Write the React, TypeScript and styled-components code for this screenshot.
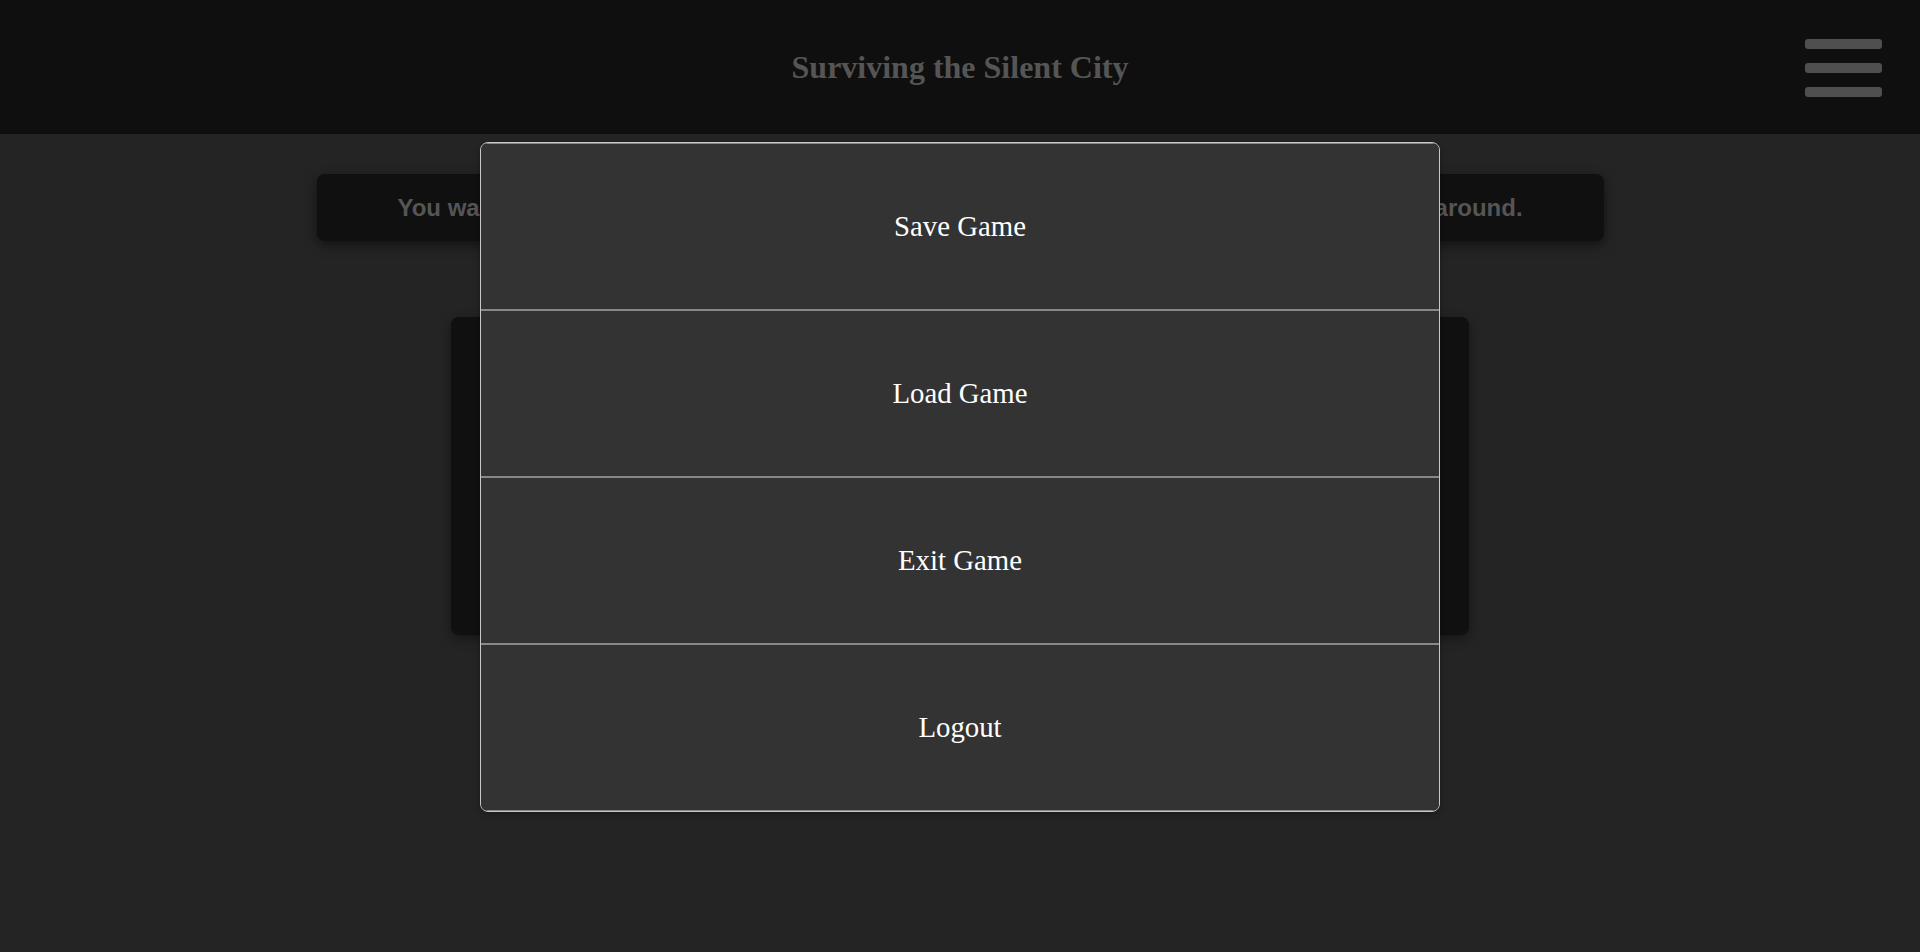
import React from "react";
import styled, { createGlobalStyle } from "styled-components";

const GlobalStyle = createGlobalStyle`
  html, body {
    margin: 0;
    padding: 0;
    background: #242424;
    height: 100%;
  }
  body {
    font-family: "Liberation Serif", "Times New Roman", serif;
    overflow: hidden;
  }
  #root {
    min-height: 100vh;
  }
`;

const Page = styled.div`
  min-height: 952px;
  background: #242424;
  display: flex;
  flex-direction: column;
`;

const Header = styled.header`
  height: 134px;
  background: #0f0f0f;
  display: grid;
  grid-template-columns: 1fr auto 1fr;
  align-items: center;
  padding: 0 38px;
  box-sizing: border-box;
`;

const Title = styled.h1`
  grid-column: 2;
  margin: 0;
  font-family: "Liberation Serif", "Times New Roman", serif;
  font-weight: bold;
  font-size: 32px;
  color: #555555;
`;

const MenuButton = styled.button`
  grid-column: 3;
  justify-self: end;
  background: none;
  border: none;
  padding: 0;
  display: flex;
  flex-direction: column;
  gap: 14px;
  cursor: pointer;
  margin-top: 1px;
`;

const Bar = styled.span`
  display: block;
  width: 77px;
  height: 10px;
  border-radius: 3px;
  background: #4f4f4f;
`;

const Main = styled.main`
  display: flex;
  flex-direction: column;
  align-items: center;
  padding-top: 40px;
  gap: 76px;
`;

const Narrative = styled.div`
  width: 1287px;
  height: 67px;
  box-sizing: border-box;
  background: #101010;
  border-radius: 8px;
  box-shadow: 0 4px 12px rgba(0, 0, 0, 0.5);
  display: flex;
  align-items: center;
  justify-content: center;
  font-family: "Liberation Sans", Arial, sans-serif;
  font-weight: bold;
  font-size: 24px;
  color: #555555;
  white-space: nowrap;
`;

const Stage = styled.div`
  width: 1018px;
  height: 318px;
  background: #101010;
  border-radius: 8px;
  box-shadow: 0 4px 12px rgba(0, 0, 0, 0.4);
`;

const Menu = styled.nav`
  position: fixed;
  top: 142px;
  left: 480px;
  width: 960px;
  box-sizing: border-box;
  background: #333333;
  border: 1px solid #c8c8c8;
  border-radius: 8px;
  overflow: hidden;
  display: flex;
  flex-direction: column;
  box-shadow: 0 2px 6px rgba(0, 0, 0, 0.3);
`;

const MenuItem = styled.button`
  height: 167px;
  box-sizing: border-box;
  background: #333333;
  border: none;
  border-top: 1px solid #888888;
  border-bottom: 1px solid #888888;
  color: #ffffff;
  font-family: "Liberation Serif", "Times New Roman", serif;
  font-size: 28.8px;
  display: flex;
  align-items: center;
  justify-content: center;
  cursor: pointer;
  padding: 0;
`;

const items = ["Save Game", "Load Game", "Exit Game", "Logout"];

export default function App() {
  return (
    <>
      <GlobalStyle />
      <Page>
        <Header>
          <Title>Surviving the Silent City</Title>
          <MenuButton aria-label="Menu">
            <Bar />
            <Bar />
            <Bar />
          </MenuButton>
        </Header>
        <Main>
          <Narrative>
            You wake up in the middle of a deserted street. The city is eerily silent, and there is no one around.
          </Narrative>
          <Stage />
        </Main>
        <Menu>
          {items.map((label) => (
            <MenuItem key={label}>{label}</MenuItem>
          ))}
        </Menu>
      </Page>
    </>
  );
}
